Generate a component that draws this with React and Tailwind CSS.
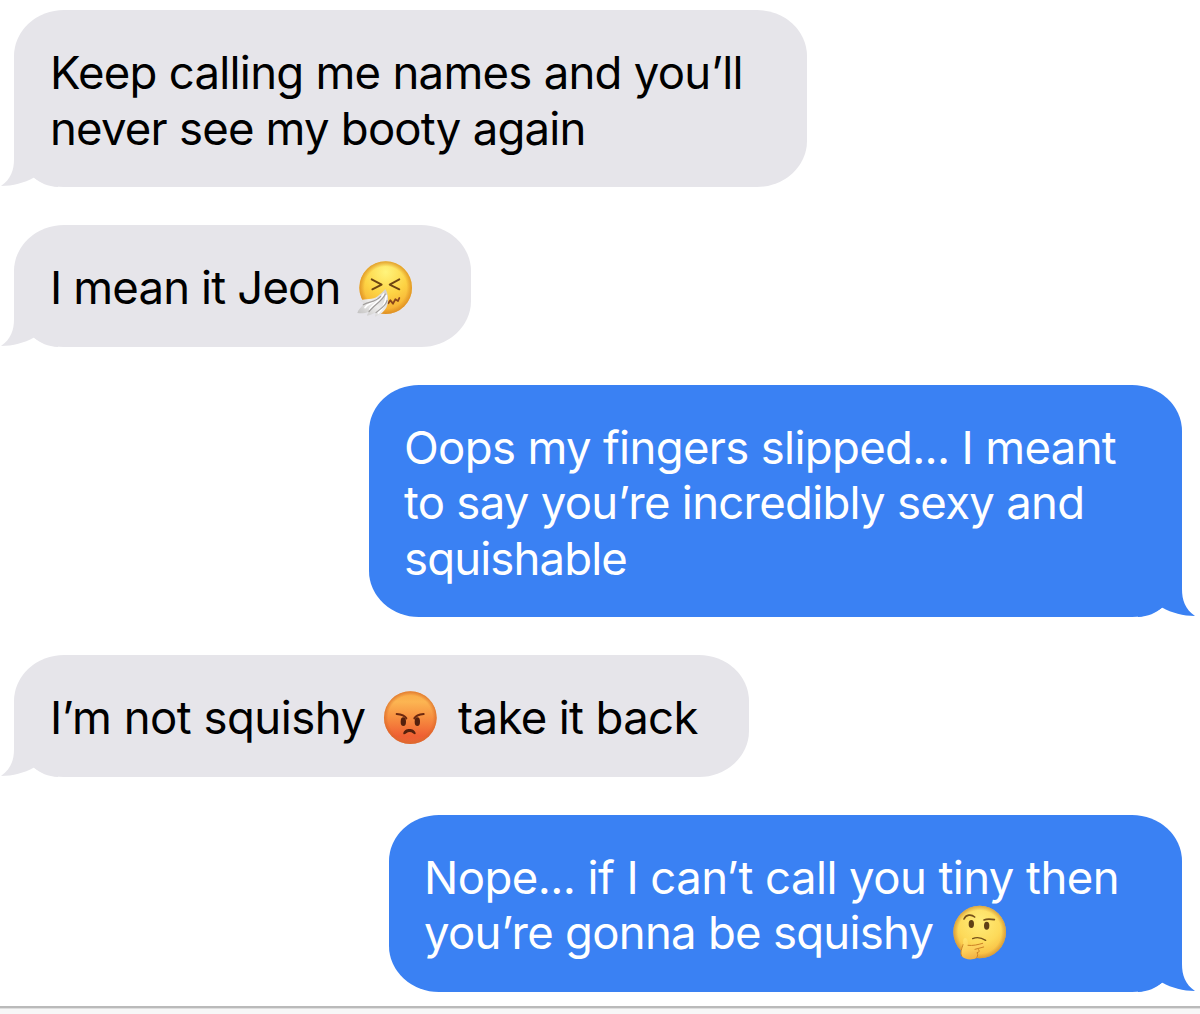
import React from "react";
import clsx from "clsx";

const SneezeFace = ({ className }) => (
  <svg viewBox="22 22 168 180" className={clsx("h-[60px] w-[56px] shrink-0", className)}>
    <defs>
      <radialGradient id="sneezeSkin" cx="0.5" cy="0.2" r="0.85">
        <stop offset="0" stopColor="#fff47c" />
        <stop offset="0.5" stopColor="#fdd344" />
        <stop offset="0.85" stopColor="#f6b034" />
        <stop offset="1" stopColor="#e8982a" />
      </radialGradient>
      <radialGradient id="sneezeEdge">
        <stop offset="0.8" stopColor="#d98a1f" stopOpacity="0" />
        <stop offset="1" stopColor="#d98a1f" stopOpacity="0.75" />
      </radialGradient>
      <linearGradient id="tissue" x1="0" y1="1" x2="1" y2="0">
        <stop offset="0" stopColor="#bdbcbc" />
        <stop offset="0.5" stopColor="#efeeed" />
        <stop offset="1" stopColor="#cfccca" />
      </linearGradient>
    </defs>
    <circle cx="108" cy="111" r="79" fill="url(#sneezeSkin)" />
    <circle cx="108" cy="111" r="79" fill="url(#sneezeEdge)" />
    <g fill="none" stroke="#6d4512" strokeWidth="5.5" strokeLinecap="round" strokeLinejoin="round">
      <path d="M66 86 L96 102 L68 116" />
      <path d="M149 86 L120 102 L149 116" />
      <path d="M116 158 L122 149 L130 159 L137 146 L145 151 L149 142" stroke="#8b461b" />
    </g>
    <path
      d="M107 115 C100 124 92 130 84 137 C70 149 47 143 30 150 C40 152 44 156 39 163 C34 171 25 178 23 187 C35 189 47 188 57 184 C56 188 51 191 53 195 C63 193 72 189 79 185 C78 191 75 194 77 198 C93 191 106 182 112 166 C118 151 116 128 107 115Z"
      fill="url(#tissue)"
    />
    <path d="M102 130 C91 151 68 162 60 176 M110 135 C107 162 95 178 86 187 M82 145 C68 158 55 158 46 171" fill="none" stroke="#fff" strokeWidth="5" strokeLinecap="round" />
    <g fill="none" stroke="#a19e9c" strokeWidth="3.5" strokeLinecap="round">
      <path d="M107 130 C97 153 74 161 58 183" />
      <path d="M112 150 C108 167 92 174 79 186" />
      <path d="M93 137 C75 157 58 151 41 162" />
    </g>
  </svg>
);

const AngryFace = ({ className }) => (
  <svg viewBox="22 22 168 180" className={clsx("h-[60px] w-[56px] shrink-0", className)}>
    <defs>
      <linearGradient id="angrySkin" x1="0" y1="0" x2="0" y2="1">
        <stop offset="0" stopColor="#f9a845" />
        <stop offset="0.2" stopColor="#fcb552" />
        <stop offset="0.5" stopColor="#f78f40" />
        <stop offset="0.85" stopColor="#ef5f33" />
        <stop offset="1" stopColor="#e76836" />
      </linearGradient>
      <radialGradient id="angryEdge">
        <stop offset="0.84" stopColor="#d86928" stopOpacity="0" />
        <stop offset="1" stopColor="#d86928" stopOpacity="0.7" />
      </radialGradient>
    </defs>
    <circle cx="107" cy="111" r="79" fill="url(#angrySkin)" />
    <circle cx="107" cy="111" r="79" fill="url(#angryEdge)" />
    <g fill="#55200d">
      <ellipse cx="86" cy="123" rx="8" ry="13" />
      <ellipse cx="128" cy="123" rx="8" ry="13" />
      <path d="M86 158 C88 141 120 141 123 158 C123 162 119 161 115 158 C109 153 101 153 95 158 C90 162 85 162 86 158Z" />
    </g>
    <g fill="none" stroke="#6c280f" strokeWidth="6" strokeLinecap="round">
      <path d="M66 100 C78 101 90 104 95 113" />
      <path d="M147 100 C136 101 124 104 119 113" />
    </g>
  </svg>
);

const ThinkingFace = ({ className }) => (
  <svg viewBox="22 22 168 180" className={clsx("h-[60px] w-[56px] shrink-0", className)}>
    <defs>
      <radialGradient id="thinkSkin" cx="0.5" cy="0.3" r="0.75">
        <stop offset="0" stopColor="#ffec7a" />
        <stop offset="0.55" stopColor="#fdda5a" />
        <stop offset="0.9" stopColor="#f7bb40" />
        <stop offset="1" stopColor="#e8a438" />
      </radialGradient>
      <radialGradient id="thinkEdge">
        <stop offset="0.82" stopColor="#cf9034" stopOpacity="0" />
        <stop offset="1" stopColor="#cf9034" stopOpacity="0.75" />
      </radialGradient>
      <linearGradient id="thinkHand" x1="0" y1="0" x2="0.3" y2="1">
        <stop offset="0" stopColor="#ffe66f" />
        <stop offset="0.6" stopColor="#fdcf5a" />
        <stop offset="1" stopColor="#f2b244" />
      </linearGradient>
    </defs>
    <circle cx="105" cy="109" r="79" fill="url(#thinkSkin)" />
    <circle cx="105" cy="109" r="79" fill="url(#thinkEdge)" />
    <g fill="#5f4016">
      <ellipse cx="80" cy="85" rx="8" ry="12" />
      <ellipse cx="126" cy="90" rx="8" ry="12" />
    </g>
    <g fill="none" stroke="#76511a" strokeWidth="5" strokeLinecap="round">
      <path d="M58 70 C64 56 80 55 90 64" />
      <path d="M118 73 C127 69 138 70 149 72" />
      <path d="M84 129 C96 124 112 127 123 134" strokeWidth="4" />
    </g>
    <path
      d="M57 130 C61 124 68 128 69 136 L71 149 C85 151 99 147 114 143 C124 141 125 151 117 154 L99 159 C106 161 106 168 102 171 C104 178 101 185 94 188 C82 194 58 192 51 181 C45 171 52 157 55 147 C57 141 54 136 57 130Z"
      fill="url(#thinkHand)"
    />
    <path
      d="M70 149 C85 151 99 147 114 143 M117 154 L91 161 M102 162 C105 166 103 171 98 171 M98 172 C101 178 98 185 94 188 M55 147 C52 157 45 171 51 181"
      fill="none"
      stroke="#cc8225"
      strokeWidth="3"
      strokeLinecap="round"
    />
  </svg>
);

const Tail = ({ sent }) => (
  <svg
    viewBox="0 0 58 56"
    className={clsx(
      "absolute bottom-0 h-[56px] w-[58px]",
      sent ? "-right-[14px] -scale-x-100 fill-[#3a81f3]" : "-left-[14px] fill-[#e6e5ea]"
    )}
  >
    <path d="M14 0 V28 C14 39 11 48 1 55 C13 55 24 52 34 46.500 C40 52 48 55.500 58 56 V0 Z" />
  </svg>
);

const Bubble = ({ sent, className, children }) => (
  <div
    className={clsx(
      "relative rounded-[50px/46px] pt-[35px] pb-[31px]",
      sent
        ? "mr-[18px] self-end bg-[#3a81f3] pl-[35px] text-white"
        : "ml-[14px] self-start bg-[#e6e5ea] pl-[36px] text-black",
      className
    )}
  >
    <Tail sent={sent} />
    {children}
  </div>
);

const Line = ({ className, children }) => (
  <div className={clsx("relative flex h-[55.5px] items-center whitespace-nowrap", className)}>{children}</div>
);

const App = () => {
  return (
    <div className="flex h-[1014px] w-[1200px] flex-col overflow-hidden bg-white font-['Inter',sans-serif] text-[45.5px] leading-[55.5px]">
      <main className="flex h-[1006px] shrink-0 flex-col gap-[38px] pt-[10px]">
        <Bubble className="w-[793px]">
          <Line className="tracking-[-0.74px]">Keep calling me names and you’ll</Line>
          <Line className="tracking-[-0.79px]">never see my booty again</Line>
        </Bubble>

        <Bubble className="w-[457px]">
          <Line className="tracking-[-0.85px]">
            <span className="w-[307px]">I mean it Jeon</span>
            <SneezeFace />
          </Line>
        </Bubble>

        <Bubble sent className="w-[813px]">
          <Line className="tracking-[-0.67px]">Oops my fingers slipped... I meant</Line>
          <Line className="tracking-[-0.72px]">to say you’re incredibly sexy and</Line>
          <Line className="tracking-[-0.87px]">squishable</Line>
        </Bubble>

        <Bubble className="w-[735px]">
          <Line className="tracking-[-0.52px]">
            <span className="w-[332px]">I’m not squishy</span>
            <AngryFace />
            <span className="ml-[20px] tracking-[-0.64px]">take it back</span>
          </Line>
        </Bubble>

        <Bubble sent className="w-[793px]">
          <Line className="tracking-[-0.57px]">Nope... if I can’t call you tiny then</Line>
          <Line className="tracking-[-0.73px]">
            <span className="w-[528px]">you’re gonna be squishy</span>
            <ThinkingFace />
          </Line>
        </Bubble>
      </main>
      <footer className="h-[8px] border-t-2 border-[#bababa] bg-[#f7f7f7] shadow-[inset_0_1px_0_#dedede]" />
    </div>
  );
};

export default App;
